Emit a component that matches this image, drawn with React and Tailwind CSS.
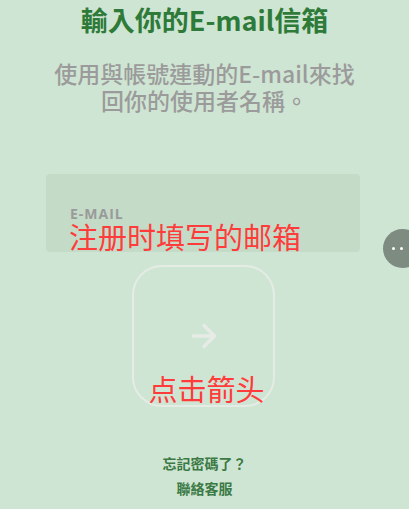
import { ArrowRight } from "lucide-react";

const tc = { fontFamily: '"Noto Sans CJK TC", "Noto Sans", sans-serif' };
const sc = { fontFamily: '"Noto Sans CJK SC", "Noto Sans", sans-serif' };

export default function App() {
  return (
    <div className="relative w-[409px] h-[509px] overflow-hidden bg-[#cfe5d3]" style={tc}>
      <div className="flex flex-col items-center pt-[2px]">
        <h1 className="text-[27px] leading-[36px] font-bold text-[#2e7a38]">輸入你的E-mail信箱</h1>
        <p className="mt-[22px] text-[23px] leading-[27px] font-medium text-[#9b9b9b] text-center">
          使用與帳號連動的E-mail來找
          <br />
          回你的使用者名稱。
        </p>

        <div className="mt-[60px] -ml-[3px] w-[314px] h-[78px] rounded-[4px] bg-[#c3dbc7] pl-[24px] pt-[33px]">
          <div className="text-[14px] leading-[14px] font-bold tracking-[1px] text-[#9a9a9a]" style={{ fontFamily: '"Open Sans", sans-serif' }}>
            E-MAIL
          </div>
          <div className="-ml-[1px] text-[29px] leading-[30px] text-[#ff3b3b]" style={sc}>注册时填写的邮箱</div>
        </div>

        <button className="relative mt-[13px] -ml-[2px] w-[143px] h-[142px] rounded-[30px] border-2 border-[#e4ece5] flex items-center justify-center">
          <ArrowRight size={36} strokeWidth={2.2} className="text-[#e6ebe6]" />
          <span className="absolute left-[6px] right-0 top-[106px] text-center text-[29px] leading-[30px] text-[#ff3b3b]" style={sc}>
            点击箭头
          </span>
        </button>

        <div className="mt-[44px] flex flex-col items-center text-[14px] leading-[25px] font-bold text-[#3b7a45]">
          <span>忘記密碼了？</span>
          <span>聯絡客服</span>
        </div>
      </div>

      <div className="absolute left-[383px] top-[229px] w-[39px] h-[39px] rounded-full bg-[#7d8b80] flex items-center gap-[5px] pl-[9px]">
        <span className="w-[3px] h-[3px] rounded-full bg-white" />
        <span className="w-[3px] h-[3px] rounded-full bg-white" />
      </div>
    </div>
  );
}
